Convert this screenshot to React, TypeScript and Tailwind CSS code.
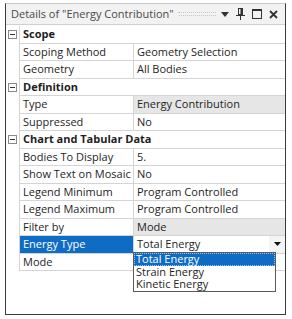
import React from "react";

type Row =
  | { kind: "cat"; label: string }
  | { kind: "prop"; label: string; value: string; readonly?: boolean; selected?: boolean };

const rows: Row[] = [
  { kind: "cat", label: "Scope" },
  { kind: "prop", label: "Scoping Method", value: "Geometry Selection" },
  { kind: "prop", label: "Geometry", value: "All Bodies" },
  { kind: "cat", label: "Definition" },
  { kind: "prop", label: "Type", value: "Energy Contribution", readonly: true },
  { kind: "prop", label: "Suppressed", value: "No" },
  { kind: "cat", label: "Chart and Tabular Data" },
  { kind: "prop", label: "Bodies To Display", value: "5." },
  { kind: "prop", label: "Show Text on Mosaic", value: "No" },
  { kind: "prop", label: "Legend Minimum", value: "Program Controlled" },
  { kind: "prop", label: "Legend Maximum", value: "Program Controlled" },
  { kind: "prop", label: "Filter by", value: "Mode", readonly: true },
  { kind: "prop", label: "Energy Type", value: "Total Energy", selected: true },
  { kind: "prop", label: "Mode", value: "" },
];

const options = ["Total Energy", "Strain Energy", "Kinetic Energy"];

function Collapse() {
  return (
    <div className="w-[9px] h-[9px] border border-[#8a8a8a] bg-white flex items-center justify-center">
      <div className="w-[5px] h-px bg-[#333]" />
    </div>
  );
}

function PinIcon() {
  return (
    <svg width="9" height="12" viewBox="0 0 9 12">
      <rect x="2.5" y="0.5" width="4" height="6" fill="none" stroke="#333" />
      <rect x="4.5" y="0.5" width="2" height="6" fill="#333" />
      <path d="M0 7.5h9" stroke="#333" />
      <path d="M4.5 8v4" stroke="#333" />
    </svg>
  );
}

export default function App() {
  return (
    <div className="w-[292px] h-[319px] bg-white pt-[3px] pl-[5px] font-['Open_Sans',sans-serif] text-[11px] text-[#1e1e1e]">
      <div className="w-[281px] h-[312px] border border-[#3a3a3a] border-t-[#c8c8c8] flex flex-col">
        {/* title bar */}
        <div className="h-[21px] shrink-0 bg-[#f2f2f2] border-b border-[#d0d0d0] flex items-center pl-[5px] pr-[7px]">
          <span className="text-[11px] text-[#4a4a4a] whitespace-nowrap">Details of "Energy Contribution"</span>
          <div className="flex-1 ml-[4px] mr-[5px] flex flex-col gap-[2px]">
            <div className="border-t border-dotted border-[#c4c4c4]" />
            <div className="border-t border-dotted border-[#c4c4c4] ml-px" />
          </div>
          <div className="flex items-center gap-[7px]">
            <svg width="8" height="5" viewBox="0 0 8 5">
              <path d="M0 0h8L4 5z" fill="#333" />
            </svg>
            <PinIcon />
            <div className="w-[10px] h-[10px] border border-[#333] border-t-2" />
            <svg width="9" height="9" viewBox="0 0 9 9">
              <path d="M1 1l7 7M8 1l-7 7" stroke="#333" strokeWidth="1.8" />
            </svg>
          </div>
        </div>

        {/* property grid */}
        <div className="flex flex-col pt-px">
          {rows.map((r, i) =>
            r.kind === "cat" ? (
              <div key={i} className="flex h-[17.5px]">
                <div className="w-[13px] shrink-0 flex items-center justify-center">
                  <Collapse />
                </div>
                <div className="flex-1 border-l border-b border-[#d4d4d4] flex items-center pl-[3px] font-bold">
                  {r.label}
                </div>
              </div>
            ) : (
              <div key={i} className="flex h-[17.5px]">
                <div className="w-[13px] shrink-0" />
                <div
                  className={`w-[114px] shrink-0 border-l border-b border-[#d4d4d4] flex items-center pl-[3px] whitespace-nowrap ${
                    r.selected ? "bg-[#0f6cc4] text-white" : ""
                  }`}
                >
                  {r.label}
                </div>
                <div
                  className={`relative flex-1 border-l border-b border-[#d4d4d4] flex items-center pl-[3px] ${
                    r.readonly ? "bg-[#e6e6e6]" : ""
                  }`}
                >
                  {r.value}
                  {r.selected && (
                    <>
                      <div className="ml-auto w-[16px] h-full flex items-center justify-center bg-[#f4f4f4]">
                        <svg width="7" height="4" viewBox="0 0 7 4">
                          <path d="M0 0h7L3.5 4z" fill="#111" />
                        </svg>
                      </div>
                      <div className="absolute left-[-1px] top-[16px] w-[143px] border border-[#5a5a5a] bg-white z-10 flex flex-col">
                        {options.map((o, j) => (
                          <div
                            key={o}
                            className={`h-[12.5px] leading-[12px] pl-[2px] ${
                              j === 0 ? "bg-[#0f6cc4] text-white outline outline-1 outline-dotted outline-[#9cc4ee] -outline-offset-1" : ""
                            }`}
                          >
                            {o}
                          </div>
                        ))}
                      </div>
                    </>
                  )}
                </div>
              </div>
            )
          )}
        </div>
      </div>
    </div>
  );
}
